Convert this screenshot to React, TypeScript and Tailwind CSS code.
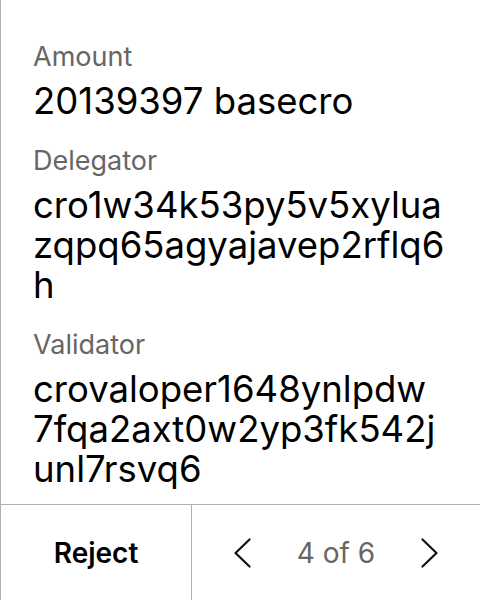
const FIELDS = [
  { label: "Amount", value: "20139397 basecro" },
  { label: "Delegator", value: "cro1w34k53py5v5xyluazqpq65agyajavep2rflq6h" },
  { label: "Validator", value: "crovaloper1648ynlpdw7fqa2axt0w2yp3fk542junl7rsvq6" },
];

function Chevron({ dir }: { dir: "left" | "right" }) {
  return (
    <svg width="17" height="30" viewBox="0 0 17 30" fill="none" stroke="#111111" strokeWidth="2.2" strokeLinecap="round" strokeLinejoin="round">
      {dir === "left" ? <polyline points="15.5,1.5 1.5,15 15.5,28.5" /> : <polyline points="1.5,1.5 15.5,15 1.5,28.5" />}
    </svg>
  );
}

export default function App() {
  return (
    <div
      className="flex h-[600px] w-[480px] flex-col border-l border-[#b0b0b0] bg-white text-black"
      style={{ fontFamily: "Inter, 'Noto Sans', sans-serif" }}
    >
      <div className="flex flex-1 flex-col gap-[24px] pl-[32px] pr-[34px] pt-[41px]">
        {FIELDS.map((f) => (
          <div key={f.label} className="flex flex-col gap-[8px]">
            <div className="text-[27px] leading-[32px] text-[#666666]">{f.label}</div>
            <div className="break-all text-[36.5px] leading-[40px] text-black">{f.value}</div>
          </div>
        ))}
      </div>

      <div className="flex h-[96px] border-t border-[#b0b0b0]">
        <button className="flex w-[191px] items-center justify-center border-r border-[#b0b0b0] text-[28px] font-semibold">
          Reject
        </button>
        <div className="flex flex-1 items-center justify-between px-[42px]">
          <Chevron dir="left" />
          <span className="text-[28px] text-[#666666]">4 of 6</span>
          <Chevron dir="right" />
        </div>
      </div>
    </div>
  );
}
